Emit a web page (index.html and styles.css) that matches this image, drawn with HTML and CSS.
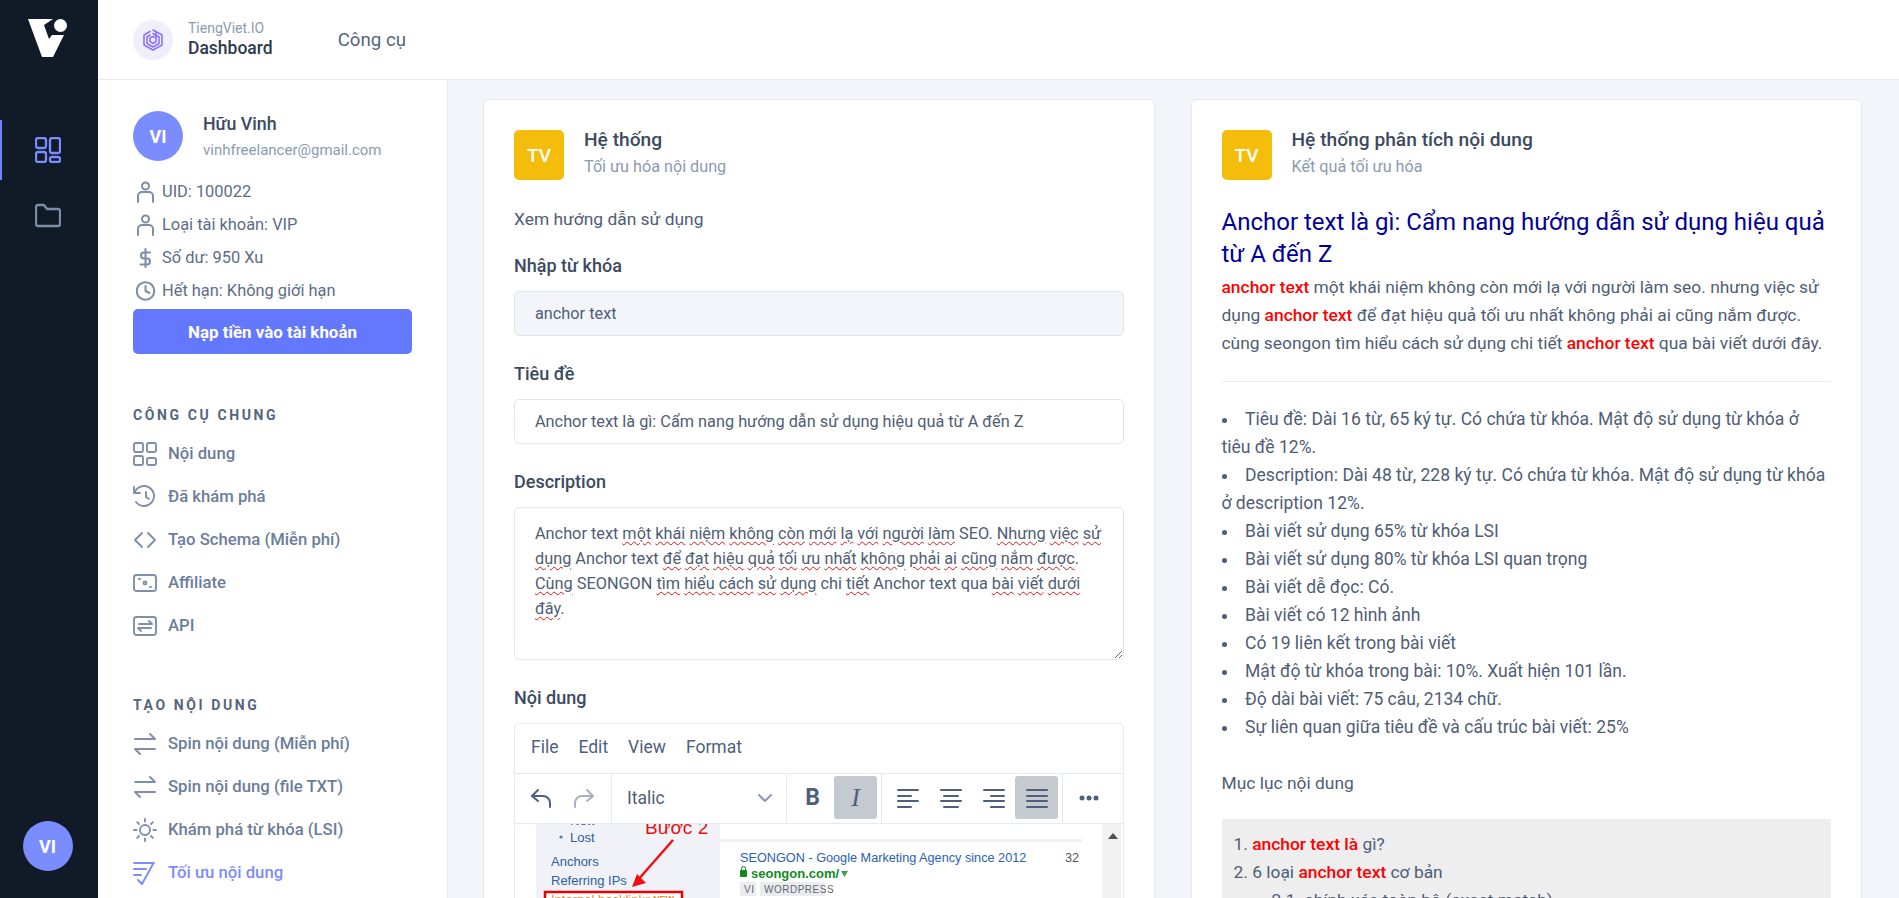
FILE: index.html

```html
<!DOCTYPE html>
<html lang="vi">
<head>
    <meta charset="UTF-8">
    <meta name="viewport" content="width=device-width, initial-scale=1.0">
    <title>TiengViet.IO Dashboard</title>
    <link rel="stylesheet" href="styles.css">
</head>
<body>

<div class="app">

    <!-- dark icon rail -->
    <aside class="rail">
        <svg class="rail-logo" viewBox="0 0 40 39" width="40" height="39">
            <path fill="#fff" d="M0 0H25L16 6 21 20 24 16H36L25 38H14Z"/>
            <circle fill="#fff" cx="32.500" cy="6.500" r="6.500"/>
        </svg>
        <a class="rail-item rail-item-active" href="#">
            <svg viewBox="0 0 26 26" width="26" height="26" class="stroke">
                <rect x="1" y="1" width="10" height="10" rx="2"/><rect x="15" y="1" width="10" height="15" rx="2"/>
                <rect x="1" y="15" width="10" height="10" rx="2"/><rect x="15" y="20" width="10" height="5" rx="2"/>
            </svg>
        </a>
        <a class="rail-item" href="#">
            <svg viewBox="0 0 26 26" width="26" height="26" class="stroke">
                <path d="M1 5a2 2 0 0 1 2-2h6l3 4h11a2 2 0 0 1 2 2v13a2 2 0 0 1-2 2H3a2 2 0 0 1-2-2Z"/>
            </svg>
        </a>
        <div class="avatar rail-avatar">VI</div>
    </aside>

    <div class="content">

        <header class="topbar">
            <div class="brand-icon">
                <svg viewBox="0 0 20 22" width="20" height="22" class="stroke">
                    <path d="M10 1 19 6V16L10 21 1 16V6L7 2.500"/>
                    <path d="M10 4.500 16 8V14.500L10 18 4 14.500V8L7 6"/>
                    <path d="M13 3V12.500L10 14.500 7 12.500V9L10 7.500 12 8.500"/>
                </svg>
            </div>
            <div class="brand-text">
                <span class="brand-sub">TiengViet.IO</span>
                <span class="brand-name">Dashboard</span>
            </div>
            <a class="top-link" href="#">Công cụ</a>
        </header>

        <div class="body-row">

            <!-- left menu panel -->
            <nav class="panel">
                <div class="profile">
                    <div class="avatar">VI</div>
                    <div class="profile-text">
                        <div class="profile-name">Hữu Vinh</div>
                        <div class="profile-mail">vinhfreelancer@gmail.com</div>
                    </div>
                </div>

                <ul class="info">
                    <li>
                        <svg viewBox="0 0 20 22" width="20" height="22" class="stroke"><circle cx="9.500" cy="5" r="3.500"/><path d="M2 21V15a4 4 0 0 1 4-4h7a4 4 0 0 1 4 4v6"/></svg>
                        UID: 100022
                    </li>
                    <li>
                        <svg viewBox="0 0 20 22" width="20" height="22" class="stroke"><circle cx="9.500" cy="5" r="3.500"/><path d="M2 21V15a4 4 0 0 1 4-4h7a4 4 0 0 1 4 4v6"/></svg>
                        Loại tài khoản: VIP
                    </li>
                    <li>
                        <svg viewBox="0 0 20 22" width="20" height="22" class="stroke"><path d="M9.500 2V20M14 5.500H8a3 3 0 0 0 0 6h3a3 3 0 0 1 0 6H4.500"/></svg>
                        Số dư: 950 Xu
                    </li>
                    <li>
                        <svg viewBox="0 0 20 22" width="20" height="22" class="stroke"><circle cx="9.500" cy="11" r="8.800"/><path d="M9.500 6V11L13.500 13"/></svg>
                        Hết hạn: Không giới hạn
                    </li>
                </ul>

                <button class="btn-topup">Nạp tiền vào tài khoản</button>

                <h4 class="menu-title">CÔNG CỤ CHUNG</h4>
                <ul class="menu">
                    <li><svg viewBox="0 0 24 24" class="stroke"><rect x="1" y="1" width="9" height="9" rx="1.500"/><rect x="14" y="1" width="9" height="9" rx="1.500"/><rect x="1" y="14" width="9" height="9" rx="1.500"/><rect x="14" y="16" width="9" height="7" rx="1.500"/></svg>Nội dung</li>
                    <li><svg viewBox="0 0 24 24" class="stroke"><path d="M1 2V8H7"/><path d="M1.500 8A10 10 0 1 1 3 17"/><path d="M13 7V12L16 14"/></svg>Đã khám phá</li>
                    <li><svg viewBox="0 0 24 24" class="stroke"><path d="M9 5 2 12 9 19M15 5 22 12 15 19"/></svg>Tạo Schema (Miễn phí)</li>
                    <li><svg viewBox="0 0 24 24" class="stroke"><rect x="1" y="4" width="22" height="16" rx="2.500"/><circle cx="12" cy="12" r="1.500"/><path d="M6 8H7M17 16H18"/></svg>Affiliate</li>
                    <li><svg viewBox="0 0 24 24" class="stroke"><rect x="1" y="3" width="22" height="18" rx="2.500"/><path d="M6 10H19M16 7 19 10M18 14H5M8 17 5 14"/></svg>API</li>
                </ul>

                <h4 class="menu-title menu-title-second">TẠO NỘI DUNG</h4>
                <ul class="menu">
                    <li><svg viewBox="0 0 24 24" class="stroke"><path d="M2 7H22L17 2M22 17H2L7 22"/></svg>Spin nội dung (Miễn phí)</li>
                    <li><svg viewBox="0 0 24 24" class="stroke"><path d="M2 7H22L17 2M22 17H2L7 22"/></svg>Spin nội dung (file TXT)</li>
                    <li><svg viewBox="0 0 24 24" class="stroke"><circle cx="12" cy="12" r="5"/><path d="M12 1V3.500M12 20.500V23M4.200 4.200 6 6M18 18 19.800 19.800M1 12H3.500M20.500 12H23M4.200 19.800 6 18M18 6 19.800 4.200"/></svg>Khám phá từ khóa (LSI)</li>
                    <li class="menu-active"><svg viewBox="0 0 24 24" class="stroke"><path d="M1 2H21M1 8H13M1 14H8M5 19 9 23 20 3"/></svg>Tối ưu nội dung</li>
                </ul>
            </nav>

            <main class="main">

                <!-- form card -->
                <section class="card">
                    <div class="card-head">
                        <div class="card-icon">TV</div>
                        <div>
                            <div class="card-title">Hệ thống</div>
                            <div class="card-sub">Tối ưu hóa nội dung</div>
                        </div>
                    </div>

                    <p class="guide">Xem hướng dẫn sử dụng</p>

                    <label class="field-label">Nhập từ khóa</label>
                    <input class="field field-off" type="text" value="anchor text" readonly>

                    <label class="field-label">Tiêu đề</label>
                    <input class="field" type="text" value="Anchor text là gì: Cẩm nang hướng dẫn sử dụng hiệu quả từ A đến Z" readonly>

                    <label class="field-label">Description</label>
                    <div class="field-area">Anchor text <u>một</u> <u>khái</u> <u>niệm</u> <u>không</u> <u>còn</u> <u>mới</u> <u>lạ</u> <u>với</u> <u>người</u> <u>làm</u> SEO. <u>Nhưng</u> <u>việc</u> <u>sử</u> <u>dụng</u> Anchor text <u>để</u> <u>đạt</u> <u>hiệu</u> <u>quả</u> <u>tối</u> <u>ưu</u> <u>nhất</u> <u>không</u> <u>phải</u> <u>ai</u> <u>cũng</u> <u>nắm</u> <u>được</u>. <u>Cùng</u> SEONGON <u>tìm</u> <u>hiểu</u> <u>cách</u> <u>sử</u> <u>dụng</u> chi <u>tiết</u> Anchor text qua <u>bài</u> <u>viết</u> <u>dưới</u> <u>đây</u>.</div>

                    <label class="field-label">Nội dung</label>
                    <div class="editor">
                        <div class="ed-menu">
                            <span>File</span><span>Edit</span><span>View</span><span>Format</span>
                        </div>
                        <div class="ed-tools">
                            <div class="ed-group ed-history">
                                <button class="ed-btn"><svg viewBox="0 0 24 24" class="stroke"><path d="M9 4 3 10 9 15"/><path d="M3 10H14a7 7 0 0 1 7 7v4"/></svg></button>
                                <button class="ed-btn ed-off"><svg viewBox="0 0 24 24" class="stroke"><path d="M15 4 21 10 15 15"/><path d="M21 10H10a7 7 0 0 0-7 7v4"/></svg></button>
                            </div>
                            <div class="ed-group ed-select">
                                <span>Italic</span>
                                <svg viewBox="0 0 14 8" width="14" height="8" class="stroke"><path d="M1 1 7 7 13 1"/></svg>
                            </div>
                            <div class="ed-group">
                                <button class="ed-btn ed-bold">B</button>
                                <button class="ed-btn ed-on ed-italic">I</button>
                            </div>
                            <div class="ed-group">
                                <button class="ed-btn"><svg viewBox="0 0 24 24" class="stroke"><path d="M2 4H22M2 10H15M2 15H22M2 21H15"/></svg></button>
                                <button class="ed-btn"><svg viewBox="0 0 24 24" class="stroke"><path d="M2 4H22M5 10H19M2 15H22M5 21H19"/></svg></button>
                                <button class="ed-btn"><svg viewBox="0 0 24 24" class="stroke"><path d="M2 4H22M9 10H22M2 15H22M9 21H22"/></svg></button>
                                <button class="ed-btn ed-on"><svg viewBox="0 0 24 24" class="stroke"><path d="M2 4H22M2 10H22M2 15H22M2 21H22"/></svg></button>
                            </div>
                            <div class="ed-group ed-last">
                                <button class="ed-btn ed-dots"><svg viewBox="0 0 20 6" width="20" height="6"><circle cx="3" cy="3" r="2.500"/><circle cx="10" cy="3" r="2.500"/><circle cx="17" cy="3" r="2.500"/></svg></button>
                            </div>
                        </div>

                        <!-- screenshot pasted in the editor body -->
                        <svg class="ed-shot" viewBox="0 1 606 75" width="606" height="75">
                            <rect x="21" width="184" height="80" fill="#f1f2f7"/>
                            <rect x="205" y="16" width="362" height="3" fill="#f0f1f4"/>
                            <rect x="587" width="20" height="80" fill="#f1f1f1"/>
                            <path d="M593 16 598 10 603 16Z" fill="#505050"/>
                            <text class="s-side" x="55" y="2">New</text>
                            <circle cx="46" cy="14" r="1.600" fill="#4a79b8"/>
                            <text class="s-side" x="55" y="19">Lost</text>
                            <text class="s-side" x="36" y="43">Anchors</text>
                            <text class="s-side" x="36" y="62">Referring IPs</text>
                            <text class="s-step" x="130" y="11">Bước 2</text>
                            <path d="M158 17 122 58" stroke="#f01010" stroke-width="2.500" fill="none"/>
                            <path d="M117 64 122 51 131 60Z" fill="#f01010"/>
                            <rect x="30" y="69" width="137" height="14" fill="#fff" stroke="#e60000" stroke-width="2.500"/>
                            <text class="s-hot" x="36" y="81">Internal backlinks</text>
                            <text class="s-new" x="138" y="79">NEW</text>
                            <text class="s-link" x="225" y="39">SEONGON - Google Marketing Agency since 2012</text>
                            <text class="s-num" x="550" y="39">32</text>
                            <rect x="225" y="47" width="7" height="7" rx="1" fill="#12891f"/>
                            <path d="M226.500 47V45.500a2 2 0 0 1 4 0V47" stroke="#12891f" fill="none"/>
                            <text class="s-site" x="236" y="55">seongon.com/</text>
                            <path d="M326 48H333L329.500 54Z" fill="#3fa04a"/>
                            <rect x="225" y="59" width="16" height="14" fill="#e9edf2"/>
                            <rect x="245" y="59" width="65" height="14" fill="#e9edf2"/>
                            <text class="s-tag" x="229" y="70">VI</text>
                            <text class="s-tag" x="249" y="70">WORDPRESS</text>
                        </svg>
                    </div>
                </section>

                <!-- result card -->
                <section class="card">
                    <div class="card-head">
                        <div class="card-icon">TV</div>
                        <div>
                            <div class="card-title">Hệ thống phân tích nội dung</div>
                            <div class="card-sub">Kết quả tối ưu hóa</div>
                        </div>
                    </div>

                    <h2 class="res-title">Anchor text là gì: Cẩm nang hướng dẫn sử dụng hiệu quả từ A đến Z</h2>
                    <p class="res-text"><b>anchor text</b> một khái niệm không còn mới lạ với người làm seo. nhưng việc sử dụng <b>anchor text</b> để đạt hiệu quả tối ưu nhất không phải ai cũng nắm được. cùng seongon tìm hiểu cách sử dụng chi tiết <b>anchor text</b> qua bài viết dưới đây.</p>
                    <hr class="res-line">

                    <ul class="res-list">
                        <li>Tiêu đề: Dài 16 từ, 65 ký tự. Có chứa từ khóa. Mật độ sử dụng từ khóa ở<br>tiêu đề 12%.</li>
                        <li>Description: Dài 48 từ, 228 ký tự. Có chứa từ khóa. Mật độ sử dụng từ khóa ở description 12%.</li>
                        <li>Bài viết sử dụng 65% từ khóa LSI</li>
                        <li>Bài viết sử dụng 80% từ khóa LSI quan trọng</li>
                        <li>Bài viết dễ đọc: Có.</li>
                        <li>Bài viết có 12 hình ảnh</li>
                        <li>Có 19 liên kết trong bài viết</li>
                        <li>Mật độ từ khóa trong bài: 10%. Xuất hiện 101 lần.</li>
                        <li>Độ dài bài viết: 75 câu, 2134 chữ.</li>
                        <li>Sự liên quan giữa tiêu đề và cấu trúc bài viết: 25%</li>
                    </ul>

                    <p class="toc-title">Mục lục nội dung</p>
                    <div class="toc">
                        <div>1. <b>anchor text là</b> gì?</div>
                        <div>2. 6 loại <b>anchor text</b> cơ bản</div>
                        <div class="toc-sub">2.1. chính xác toàn bộ (exact match)</div>
                        <div class="toc-sub">2.2. khớp một phần (partial match)</div>
                    </div>
                </section>

            </main>
        </div>
    </div>
</div>

</body>
</html>
```

FILE: styles.css

```css
* {
    box-sizing: border-box;
}

html, body {
    height: 100%;
    margin: 0;
    overflow: hidden;
}

body {
    font-family: Roboto, "Noto Sans", sans-serif;
    font-size: 17.400px;
    color: #4f5d75;
    background-color: #f4f5fa;
}

ul {
    list-style: none;
    margin: 0;
    padding: 0;
}

a {
    color: inherit;
    text-decoration: none;
}

.stroke {
    fill: none;
    stroke: currentColor;
    stroke-width: 2;
    stroke-linecap: round;
    stroke-linejoin: round;
}

.app {
    display: flex;
    height: 100vh;
}

/* rail */

.rail {
    width: 98px;
    flex-shrink: 0;
    display: flex;
    flex-direction: column;
    align-items: center;
    background-color: #111a27;
    padding: 19px 3px 0 0;
}

.rail-logo {
    margin-bottom: 62px;
}

.rail-item {
    align-self: stretch;
    height: 60px;
    margin-bottom: 5px;
    display: flex;
    align-items: center;
    justify-content: center;
    color: #7d8da6;
    border-left: 2px solid transparent;
    padding-right: 2px;
}

.rail-item svg {
    stroke-width: 2.300;
}

.rail-item-active {
    color: #7b8cff;
    border-left-color: #6f82ff;
}

.avatar {
    width: 50px;
    height: 50px;
    flex-shrink: 0;
    border-radius: 50%;
    background-color: #7b8cff;
    color: #fff;
    font-size: 18px;
    font-weight: 700;
    display: flex;
    align-items: center;
    justify-content: center;
}

.rail-avatar {
    margin-top: auto;
    margin-bottom: 27px;
}

/* top bar */

.content {
    flex: 1;
    min-width: 0;
    display: flex;
    flex-direction: column;
}

.topbar {
    height: 80px;
    flex-shrink: 0;
    display: flex;
    align-items: center;
    padding-left: 35px;
    background-color: #fff;
    border-bottom: 1px solid #e6e8f2;
}

.brand-icon {
    width: 40px;
    height: 40px;
    border-radius: 50%;
    background-color: #f0edfd;
    color: #8b74f5;
    display: flex;
    align-items: center;
    justify-content: center;
}

.brand-icon svg {
    stroke-width: 1.600;
}

.brand-text {
    margin-left: 15px;
    display: flex;
    flex-direction: column;
}

.brand-sub {
    font-size: 14px;
    line-height: 16px;
    color: #8b9ab0;
}

.brand-name {
    font-size: 17.500px;
    font-weight: 500;
    line-height: 24px;
    color: #2d3a4e;
}

.top-link {
    margin-left: 65px;
    font-size: 18.700px;
    color: #56657e;
}

.body-row {
    flex: 1;
    min-height: 0;
    display: flex;
}

/* left panel */

.panel {
    width: 350px;
    flex-shrink: 0;
    background-color: #fff;
    border-right: 1px solid #e6e8f2;
    padding: 31px 35px 0;
}

.profile {
    display: flex;
    gap: 20px;
}

.profile-name {
    font-size: 17.800px;
    font-weight: 500;
    line-height: 26px;
    color: #3b4a60;
}

.profile-mail {
    font-size: 15px;
    line-height: 20px;
    margin-top: 3px;
    color: #8b9ab0;
}

.info {
    margin-top: 14px;
}

.info li {
    height: 33px;
    display: flex;
    align-items: center;
    gap: 6px;
    padding-left: 3px;
    font-size: 16.400px;
    color: #5c6c87;
}

.info svg {
    color: #7d8da6;
    flex-shrink: 0;
}

.btn-topup {
    display: block;
    width: 100%;
    height: 45px;
    margin-top: 2px;
    border: none;
    border-radius: 5px;
    background-color: #6478ff;
    color: #fff;
    font-family: inherit;
    font-size: 16.900px;
    font-weight: 700;
}

.menu-title {
    margin: 52px 0 0;
    font-size: 14px;
    font-weight: 700;
    line-height: 18px;
    letter-spacing: 2.600px;
    color: #56657e;
}

.menu-title-second {
    margin-top: 49px;
}

.menu {
    margin-top: 8px;
}

.menu li {
    height: 43px;
    display: flex;
    align-items: center;
    gap: 11px;
    font-size: 16.700px;
    font-weight: 500;
    color: #6b7d9b;
}

.menu svg {
    width: 24px;
    height: 24px;
    flex-shrink: 0;
    stroke-width: 1.900;
    color: #7f8fa9;
}

.menu li.menu-active,
.menu li.menu-active svg {
    color: #7b8cff;
}

/* cards */

.main {
    flex: 1;
    min-width: 0;
    display: grid;
    grid-template-columns: 1fr 1fr;
    align-items: start;
    gap: 36px;
    padding: 19px 37px 0 35px;
}

.card {
    background-color: #fff;
    border: 1px solid #e6e8f2;
    border-radius: 5px;
    padding: 30px;
}

.card-head {
    display: flex;
    gap: 20px;
}

.card-icon {
    width: 50px;
    height: 50px;
    flex-shrink: 0;
    border-radius: 5px;
    background-color: #f5bd0b;
    color: #fff;
    font-size: 19px;
    font-weight: 500;
    display: flex;
    align-items: center;
    justify-content: center;
}

.card-title {
    font-size: 19.200px;
    font-weight: 500;
    line-height: 20px;
    color: #3b4a60;
}

.card-sub {
    margin-top: 7px;
    font-size: 16.200px;
    line-height: 20px;
    color: #8b9ab0;
}

/* form */

.guide {
    margin: 27px 0 -3px;
    line-height: 24px;
}

.field-label {
    display: block;
    margin: 26px 0 13px;
    font-size: 18px;
    font-weight: 500;
    line-height: 24px;
    color: #3b4a60;
}

.field {
    display: block;
    width: 100%;
    height: 45px;
    padding: 0 20px;
    border: 1px solid #e3e5ee;
    border-radius: 5px;
    background-color: #fff;
    font-family: inherit;
    font-size: 16.300px;
    color: #4f5d75;
    outline: none;
}

.field-off {
    background-color: #f4f5fa;
}

.field-area {
    height: 153px;
    padding: 13px 20px;
    border: 1px solid #e3e5ee;
    border-radius: 5px;
    font-size: 16.300px;
    line-height: 25px;
    color: #4f5d75;
    overflow: auto;
    resize: vertical;
}

.field-area u {
    text-decoration: underline wavy #e01010 1px;
    text-underline-offset: 2px;
}

/* editor */

.editor {
    border: 1px solid #e6e8f2;
    border-radius: 5px 5px 0 0;
    overflow: hidden;
}

.ed-menu {
    height: 49px;
    display: flex;
    align-items: center;
    gap: 20px;
    padding: 0 0 3px 16px;
    font-size: 17.500px;
    color: #4f5f7c;
}

.ed-tools {
    height: 51px;
    display: flex;
    border-top: 1px solid #e6e8f2;
    border-bottom: 1px solid #e6e8f2;
}

.ed-group {
    display: flex;
    align-items: center;
    padding: 0 4px 2px;
    border-right: 1px solid #e6e8f2;
}

.ed-history {
    width: 97px;
}

.ed-last {
    border-right: none;
}

.ed-btn {
    width: 43px;
    height: 43px;
    padding: 0;
    border: none;
    border-radius: 3px;
    background: none;
    color: #4f5f7c;
    display: flex;
    align-items: center;
    justify-content: center;
    font-family: inherit;
}

.ed-btn svg {
    width: 24px;
    height: 24px;
}

.ed-btn.ed-dots svg {
    width: 20px;
    height: 6px;
    fill: currentColor;
}

.ed-off {
    color: #a9b2c1;
}

.ed-on {
    background-color: #c5c9d0;
}

.ed-bold {
    font-size: 23px;
    font-weight: 700;
}

.ed-italic {
    font-family: "Liberation Serif", serif;
    font-size: 26px;
    font-style: italic;
}

.ed-select {
    width: 175px;
    justify-content: space-between;
    padding: 0 14px 2px 15px;
    font-size: 17.500px;
}

.ed-select svg {
    color: #8f99aa;
}

.ed-shot {
    display: block;
}

.ed-shot text {
    font-family: "Liberation Sans", sans-serif;
}

.s-side {
    font-size: 13px;
    fill: #2f5e9e;
}

.s-step {
    font-size: 19px;
    fill: #e81010;
}

.s-hot {
    font-size: 13px;
    fill: #f08a3c;
}

.s-new {
    font-size: 9px;
    font-weight: 700;
    fill: #f08a3c;
}

.s-link {
    font-size: 12.700px;
    fill: #2a62b0;
}

.s-num {
    font-size: 12.700px;
    fill: #555;
}

.s-site {
    font-size: 13px;
    font-weight: 700;
    fill: #12891f;
}

.s-tag {
    font-size: 10px;
    fill: #666;
    letter-spacing: 0.500px;
}

/* result */

.res-title {
    margin: 26px 0 0;
    font-size: 24px;
    font-weight: 400;
    line-height: 32px;
    color: #000099;
}

.res-text {
    margin: 3px 0 0;
    line-height: 28px;
}

.res-text b,
.toc b {
    font-weight: 500;
    color: #ff0000;
}

.res-line {
    margin: 24px 0 23px;
    border: none;
    border-top: 1px solid #e9ebf2;
}

.res-list {
    list-style: disc inside;
    font-size: 17.550px;
    line-height: 28px;
}

.toc-title {
    margin: 28px 0 0;
    line-height: 28px;
}

.toc {
    margin-top: 22px;
    padding: 11px 12px;
    background-color: #eeeeee;
    line-height: 28px;
}

.toc-sub {
    padding-left: 38px;
}
```
